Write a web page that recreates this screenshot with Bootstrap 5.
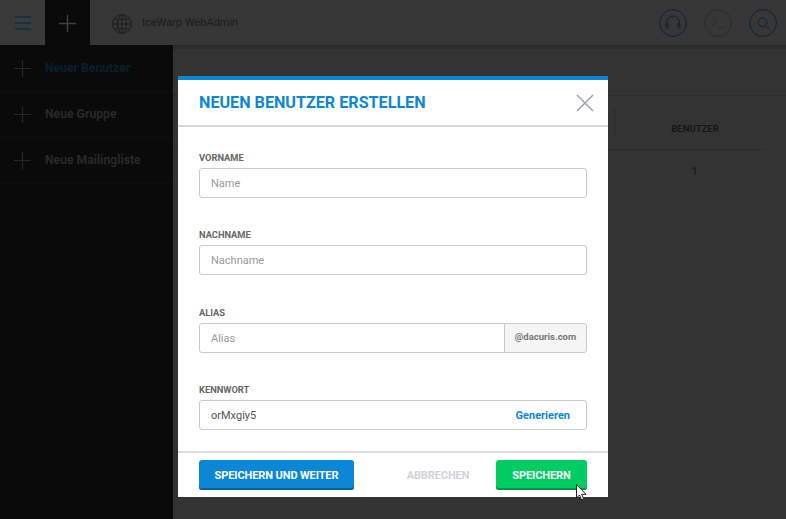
<!DOCTYPE html>
<html lang="de">
<head>
<meta charset="utf-8">
<title>IceWarp WebAdmin</title>
<link href="https://cdn.jsdelivr.net/npm/bootstrap@5.3.0/dist/css/bootstrap.min.css" rel="stylesheet">
<style>
html,body{height:100%;overflow:hidden}
body{font-family:Roboto,"Liberation Sans",sans-serif;background:#333;color:#161616;font-size:12px}
.shell{width:786px;height:519px;position:relative;overflow:hidden}
.topbar{height:45px;background:#363636}
.tb-menu{width:45px;background:#3a3a3a;padding-top:1px}
.tb-plus{width:45px;background:#0a0a0a;padding-top:1px}
.tb-title{color:#1c1c1c;font-size:11px;margin-left:22px;gap:10px;padding-top:2px}
.tb-tools{gap:17px;padding-right:9px}
.tb-tool{width:28px;height:28px}
.below{height:474px}
.sidenav{width:173px;background:#0a0a0a;padding-top:1px}
.side-item{height:46px;padding-left:14px;gap:14px;border-bottom:1px solid #0e0e0e;font-weight:700;font-size:12.200px;color:#282828}
.side-active{color:#05202f}
.side-content{background:#333;border-top:4px solid #2b2b2b}
.sub-head{height:47px;border-bottom:1px solid #2b2b2b}
.tbl-head{height:54px;margin-right:22px;border-bottom:1px solid #2b2b2b;padding-top:1px}
.tbl-col{width:144px;margin-left:5px;text-align:center;font-size:9.500px;font-weight:700;color:#161616;padding:12px 0 0 6px}
.tbl-edge{width:3px;height:28px;margin-left:439px;border:1px solid #2b2b2b;border-left:0;border-radius:0 2px 2px 0}
.tbl-val{width:149px;margin-left:447px;text-align:center;font-size:11px;color:#161616;padding-top:14px}
.dialog-box{position:absolute;left:178px;top:76px;width:430px;height:421px;background:#fff;border:0;border-top:4px solid #0b87d6;border-radius:0;display:flex;flex-direction:column}
.dlg-head{height:47px;border-bottom:2px solid #d8d8d8;padding:1px 14px 0 21px}
.dlg-title{font-size:16.150px;font-weight:700;color:#0b87d6;line-height:1;margin:0}
.dlg-close{background:none;border:0;padding:0;width:18px;height:18px;line-height:0}
.dlg-body{height:324px;padding:0 21px;flex:none}
.fld{height:77.300px;padding-top:25px}
.fld-label{display:block;font-size:9.300px;font-weight:700;color:#666;line-height:12px;margin:0 0 4px}
.fld-input{height:30px;border:1px solid #c9c9c9;border-radius:3px;font-size:11px;padding:1px 11px 0;color:#555;font-family:inherit}
.fld-input::placeholder{color:#9a9a9a}
.fld-input:focus{box-shadow:none;border-color:#c9c9c9}
.fld-addon{width:83px;justify-content:center;background:#f5f5f5;border:1px solid #c9c9c9;border-radius:0 3px 3px 0;font-size:9.500px;font-weight:700;color:#777;padding:0}
.fld-gen{position:absolute;right:17px;top:1px;line-height:30px;color:#0b87d6;font-weight:700;font-size:11px;z-index:5;text-decoration:none}
.dlg-foot{flex:1;border-top:2px solid #dcdcdc;padding:7px 21px 0;align-items:flex-start}
.act{height:30px;border:0;border-radius:3px;font-size:11px;font-weight:700;color:#fff;padding:2px 0 0;letter-spacing:-.1px}
.act-blue{width:155px;background:#0b87d6;box-shadow:inset 0 -2px 0 #08639d}
.act-green{width:91px;background:#00cd61;box-shadow:inset 0 -2px 0 #019549}
.act-ghost{color:#cfd3d8;background:none;width:66px;margin-right:25px}
.act-blue:hover,.act-blue:active{background:#0b87d6;color:#fff}
.act-green:hover,.act-green:active{background:#00cd61;color:#fff}
.pointer{position:absolute;left:576px;top:484px;z-index:10}
</style>
</head>
<body>
<div class="shell">
  <header class="topbar d-flex">
    <div class="tb-menu d-flex align-items-center justify-content-center">
      <svg width="16" height="14" viewBox="0 0 16 14"><path d="M0 1h16M0 7h16M0 13h16" stroke="#0a2f4a" stroke-width="1.400" fill="none"/></svg>
    </div>
    <div class="tb-plus d-flex align-items-center justify-content-center">
      <svg width="17" height="17" viewBox="0 0 17 17"><path d="M8.500 0v17M0 8.500h17" stroke="#404040" stroke-width="1.500" fill="none"/></svg>
    </div>
    <div class="tb-title d-flex align-items-center flex-grow-1">
      <svg width="20" height="20" viewBox="0 0 20 20" fill="none" stroke="#1c1c1c" stroke-width=".9"><circle cx="10" cy="10" r="9.400"/><ellipse cx="10" cy="10" rx="4.400" ry="9.400"/><path d="M10 .6v18.800M.6 10h18.800M2 5.200h16M2 14.800h16"/></svg>
      <span>IceWarp WebAdmin</span>
    </div>
    <div class="tb-tools d-flex align-items-center">
      <svg class="tb-tool" viewBox="0 0 28 28" fill="none" stroke="#0a2436" stroke-width="1"><circle cx="14" cy="14" r="13.400"/><path d="M7.500 17v-3.500a6.500 6.500 0 0 1 13 0V17"/><rect x="7" y="14.500" width="2.400" height="5" rx="1.200"/><rect x="18.600" y="14.500" width="2.400" height="5" rx="1.200"/></svg>
      <svg class="tb-tool" viewBox="0 0 28 28" fill="none" stroke="#2b2b2b" stroke-width="1"><circle cx="14" cy="14" r="13.400"/><path d="M8 9l4.500 4L8 17M13 18.500h7"/></svg>
      <svg class="tb-tool" viewBox="0 0 28 28" fill="none" stroke="#0a2436" stroke-width="1"><circle cx="14" cy="14" r="13.400"/><circle cx="13.500" cy="13.500" r="4.300"/><path d="M16.500 16.500l3.500 3.500"/></svg>
    </div>
  </header>
  <div class="below d-flex">
    <nav class="sidenav flex-shrink-0">
      <div class="side-item side-active d-flex align-items-center">
        <svg width="17" height="17" viewBox="0 0 17 17"><path d="M8.500 0v17M0 8.500h17" stroke="#262626" stroke-width="1.200" fill="none"/></svg>
        <span>Neuer Benutzer</span>
      </div>
      <div class="side-item d-flex align-items-center">
        <svg width="17" height="17" viewBox="0 0 17 17"><path d="M8.500 0v17M0 8.500h17" stroke="#262626" stroke-width="1.200" fill="none"/></svg>
        <span>Neue Gruppe</span>
      </div>
      <div class="side-item d-flex align-items-center">
        <svg width="17" height="17" viewBox="0 0 17 17"><path d="M8.500 0v17M0 8.500h17" stroke="#262626" stroke-width="1.200" fill="none"/></svg>
        <span>Neue Mailingliste</span>
      </div>
    </nav>
    <main class="side-content flex-grow-1">
      <div class="sub-head"></div>
      <div class="tbl-head d-flex align-items-center">
        <div class="tbl-edge"></div>
        <div class="tbl-col">BENUTZER</div>
      </div>
      <div class="tbl-val">1</div>
    </main>
  </div>

  <div class="dialog-box">
    <div class="dlg-head d-flex align-items-center justify-content-between">
      <h5 class="dlg-title">NEUEN BENUTZER ERSTELLEN</h5>
      <button type="button" class="dlg-close" aria-label="Schließen">
        <svg width="18" height="18" viewBox="0 0 18 18"><path d="M1 1l16 16M17 1L1 17" stroke="#9ea2a8" stroke-width="1.500" fill="none"/></svg>
      </button>
    </div>
    <div class="dlg-body">
      <div class="fld">
        <label class="fld-label">VORNAME</label>
        <input class="form-control fld-input" placeholder="Name">
      </div>
      <div class="fld">
        <label class="fld-label">NACHNAME</label>
        <input class="form-control fld-input" placeholder="Nachname">
      </div>
      <div class="fld">
        <label class="fld-label">ALIAS</label>
        <div class="input-group">
          <input class="form-control fld-input" placeholder="Alias">
          <span class="input-group-text fld-addon">@dacuris.com</span>
        </div>
      </div>
      <div class="fld">
        <label class="fld-label">KENNWORT</label>
        <div class="position-relative">
          <input class="form-control fld-input" value="orMxgiy5">
          <a class="fld-gen" href="#">Generieren</a>
        </div>
      </div>
    </div>
    <div class="dlg-foot d-flex justify-content-between">
      <button type="button" class="btn act act-blue">SPEICHERN UND WEITER</button>
      <div class="d-flex">
        <button type="button" class="btn act act-ghost">ABBRECHEN</button>
        <button type="button" class="btn act act-green">SPEICHERN</button>
      </div>
    </div>
  </div>

  <svg class="pointer" width="12" height="17" viewBox="0 0 12 17"><path d="M.5.500v13.500l3-3 2.200 5 2-.9-2.100-4.800h4.400z" fill="#fff" stroke="#222" stroke-width="1"/></svg>
</div>
<script src="https://cdn.jsdelivr.net/npm/bootstrap@5.3.0/dist/js/bootstrap.bundle.min.js"></script>
</body>
</html>
